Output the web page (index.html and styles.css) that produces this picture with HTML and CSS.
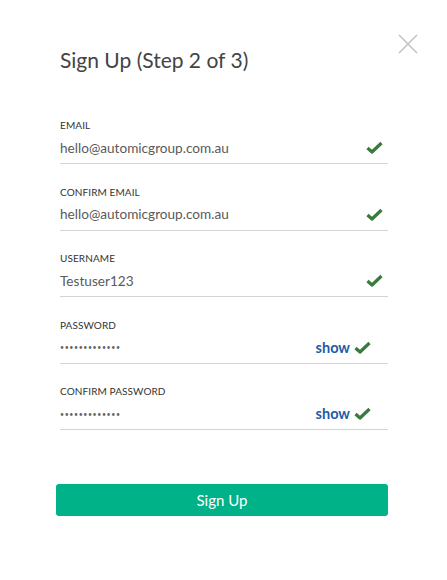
FILE: index.html
```html
<!DOCTYPE html>
<html>
<head>
<meta charset="utf-8">
<link rel="stylesheet" href="styles.css">
</head>
<body>
<div class="modal">
  <button class="close" aria-label="Close">
    <svg width="20" height="20" viewBox="0 0 20 20"><path d="M1 1L19 19M19 1L1 19" stroke="#c4c4c4" stroke-width="1.6" fill="none"/></svg>
  </button>
  <h1 class="title">Sign Up (Step 2 of 3)</h1>
  <form class="form">
    <div class="field">
      <div class="label">EMAIL</div>
      <div class="row"><span class="value">hello@automicgroup.com.au</span><span class="icons"><svg class="check" width="17" height="13" viewBox="0 0 17 13"><path d="M1.5 7L6 11L15.5 2" stroke="#3a7a3c" stroke-width="3.2" fill="none" stroke-linejoin="round"/></svg></span></div>
    </div>
    <div class="field">
      <div class="label">CONFIRM EMAIL</div>
      <div class="row"><span class="value">hello@automicgroup.com.au</span><span class="icons"><svg class="check" width="17" height="13" viewBox="0 0 17 13"><path d="M1.5 7L6 11L15.5 2" stroke="#3a7a3c" stroke-width="3.2" fill="none" stroke-linejoin="round"/></svg></span></div>
    </div>
    <div class="field">
      <div class="label">USERNAME</div>
      <div class="row"><span class="value">Testuser123</span><span class="icons"><svg class="check" width="17" height="13" viewBox="0 0 17 13"><path d="M1.5 7L6 11L15.5 2" stroke="#3a7a3c" stroke-width="3.2" fill="none" stroke-linejoin="round"/></svg></span></div>
    </div>
    <div class="field">
      <div class="label">PASSWORD</div>
      <div class="row"><span class="value dots">•••••••••••••</span><span class="icons pw"><span class="show">show</span><svg class="check" width="17" height="13" viewBox="0 0 17 13"><path d="M1.5 7L6 11L15.5 2" stroke="#3a7a3c" stroke-width="3.2" fill="none" stroke-linejoin="round"/></svg></span></div>
    </div>
    <div class="field">
      <div class="label">CONFIRM PASSWORD</div>
      <div class="row"><span class="value dots">•••••••••••••</span><span class="icons pw"><span class="show">show</span><svg class="check" width="17" height="13" viewBox="0 0 17 13"><path d="M1.5 7L6 11L15.5 2" stroke="#3a7a3c" stroke-width="3.2" fill="none" stroke-linejoin="round"/></svg></span></div>
    </div>
    <button type="button" class="submit">Sign Up</button>
  </form>
</div>
</body>
</html>
```

FILE: styles.css
```css
* { box-sizing: border-box; }
html, body { margin: 0; padding: 0; background: #fff; }
body { font-family: "Lato", "Open Sans", sans-serif; width: 447px; height: 580px; }
.modal { position: relative; padding: 46px 59px 0 60px; }
.close {
  position: absolute; top: 34px; left: 398px;
  width: 20px; height: 20px; padding: 0; border: 0; background: none;
}
.close svg { display: block; }
.title {
  margin: 0; font-size: 21px; line-height: 28px; font-weight: 400; color: #444;
}
.form { margin-top: 44px; display: flex; flex-direction: column; }
.field { margin-bottom: 20.6px; }
.label {
  font-size: 10px; line-height: 14px; color: #333; letter-spacing: 0.1px;
}
.row {
  display: flex; align-items: center; justify-content: space-between;
  height: 32px; border-bottom: 1px solid #d4d4d4; padding-right: 5px;
}
.value { font-size: 13.6px; color: #5a5a5a; }
.dots { font-size: 7px; letter-spacing: 0.6px; color: #666; }
.icons { display: flex; align-items: center; }
.icons.pw { padding-right: 12px; }
.check { display: block; }
.show { font-size: 14.5px; font-weight: 700; color: #1f5ca8; margin-right: 4px; }
.submit {
  margin: 33px 0 0 -4px; width: 332px; height: 32px;
  background: #00b287; color: #fff; border: 0; border-radius: 3px;
  font-family: inherit; font-size: 15px;
}
```
